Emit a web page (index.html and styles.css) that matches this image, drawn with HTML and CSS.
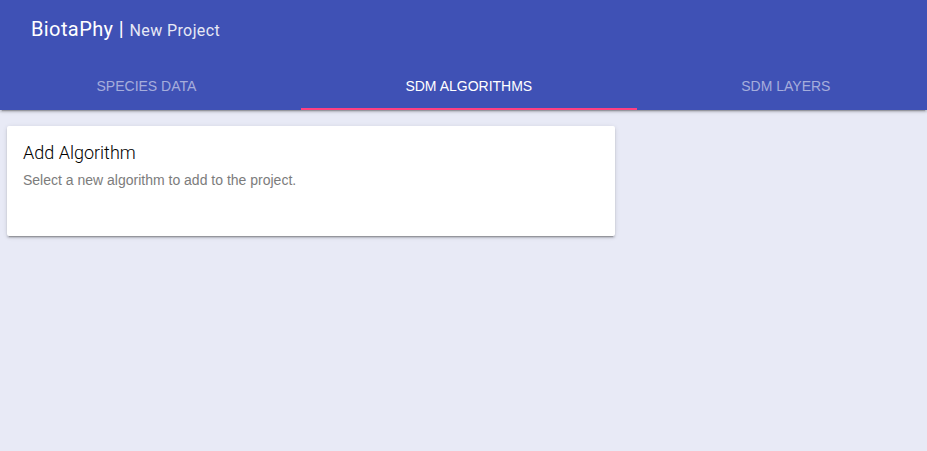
FILE: index.html
```html
<!DOCTYPE html>
<html lang="en">
<head>
<meta charset="utf-8">
<meta name="viewport" content="width=device-width, initial-scale=1">
<title>BiotaPhy</title>
<link rel="stylesheet" href="styles.css">
</head>
<body>
<header class="header">
  <h1 class="title">BiotaPhy | <small class="subtitle">New Project</small></h1>
  <nav class="tabs">
    <a class="tab" href="#species">Species Data</a>
    <a class="tab active" href="#algorithms" aria-current="page">SDM Algorithms</a>
    <a class="tab" href="#layers">SDM Layers</a>
  </nav>
</header>
<main class="content">
  <section class="card">
    <h2 class="card-title">Add Algorithm</h2>
    <p class="card-text">Select a new algorithm to add to the project.</p>
  </section>
</main>
</body>
</html>
```
FILE: styles.css
```css
* {
  box-sizing: border-box;
}

body {
  margin: 0;
  min-height: 100vh;
  background: #e8eaf6;
  font-family: "Liberation Sans", Arial, sans-serif;
}

.header {
  overflow: hidden;
  background: #3f51b5;
  color: #fff;
}

.header,
.card {
  box-shadow:
    0 2px 2px 0 rgba(0, 0, 0, 0.14),
    0 1px 5px 0 rgba(0, 0, 0, 0.12),
    0 3px 1px -2px rgba(0, 0, 0, 0.2);
}

.title {
  margin: 0;
  padding: 13px 31px 17px;
  font: 400 20px/32px Roboto, sans-serif;
  letter-spacing: 0.02em;
}

.subtitle {
  font-size: 16px;
  line-height: 20px;
  opacity: 0.87;
}

.tabs {
  display: flex;
  margin: 0 -8px;
}

.tab {
  flex: 1 1 auto;
  height: 48px;
  border-bottom: 2px solid transparent;
  color: rgba(255, 255, 255, 0.54);
  font-size: 14px;
  line-height: 48px;
  text-align: center;
  text-decoration: none;
  text-transform: uppercase;
}

.active {
  border-color: #ff4081;
  color: #fff;
}

.content {
  padding: 16px 7px;
}

.card {
  width: 66.6%;
  max-width: 608px;
  min-height: 110px;
  padding: 15px 16px;
  border-radius: 2px;
  background: #fff;
}

.card-title {
  margin: 0;
  font: 300 18px/24px Roboto, sans-serif;
}

.card-text {
  margin: 5px 0 0;
  color: #7c7c7c;
  font-size: 14px;
  line-height: 20px;
}
```
